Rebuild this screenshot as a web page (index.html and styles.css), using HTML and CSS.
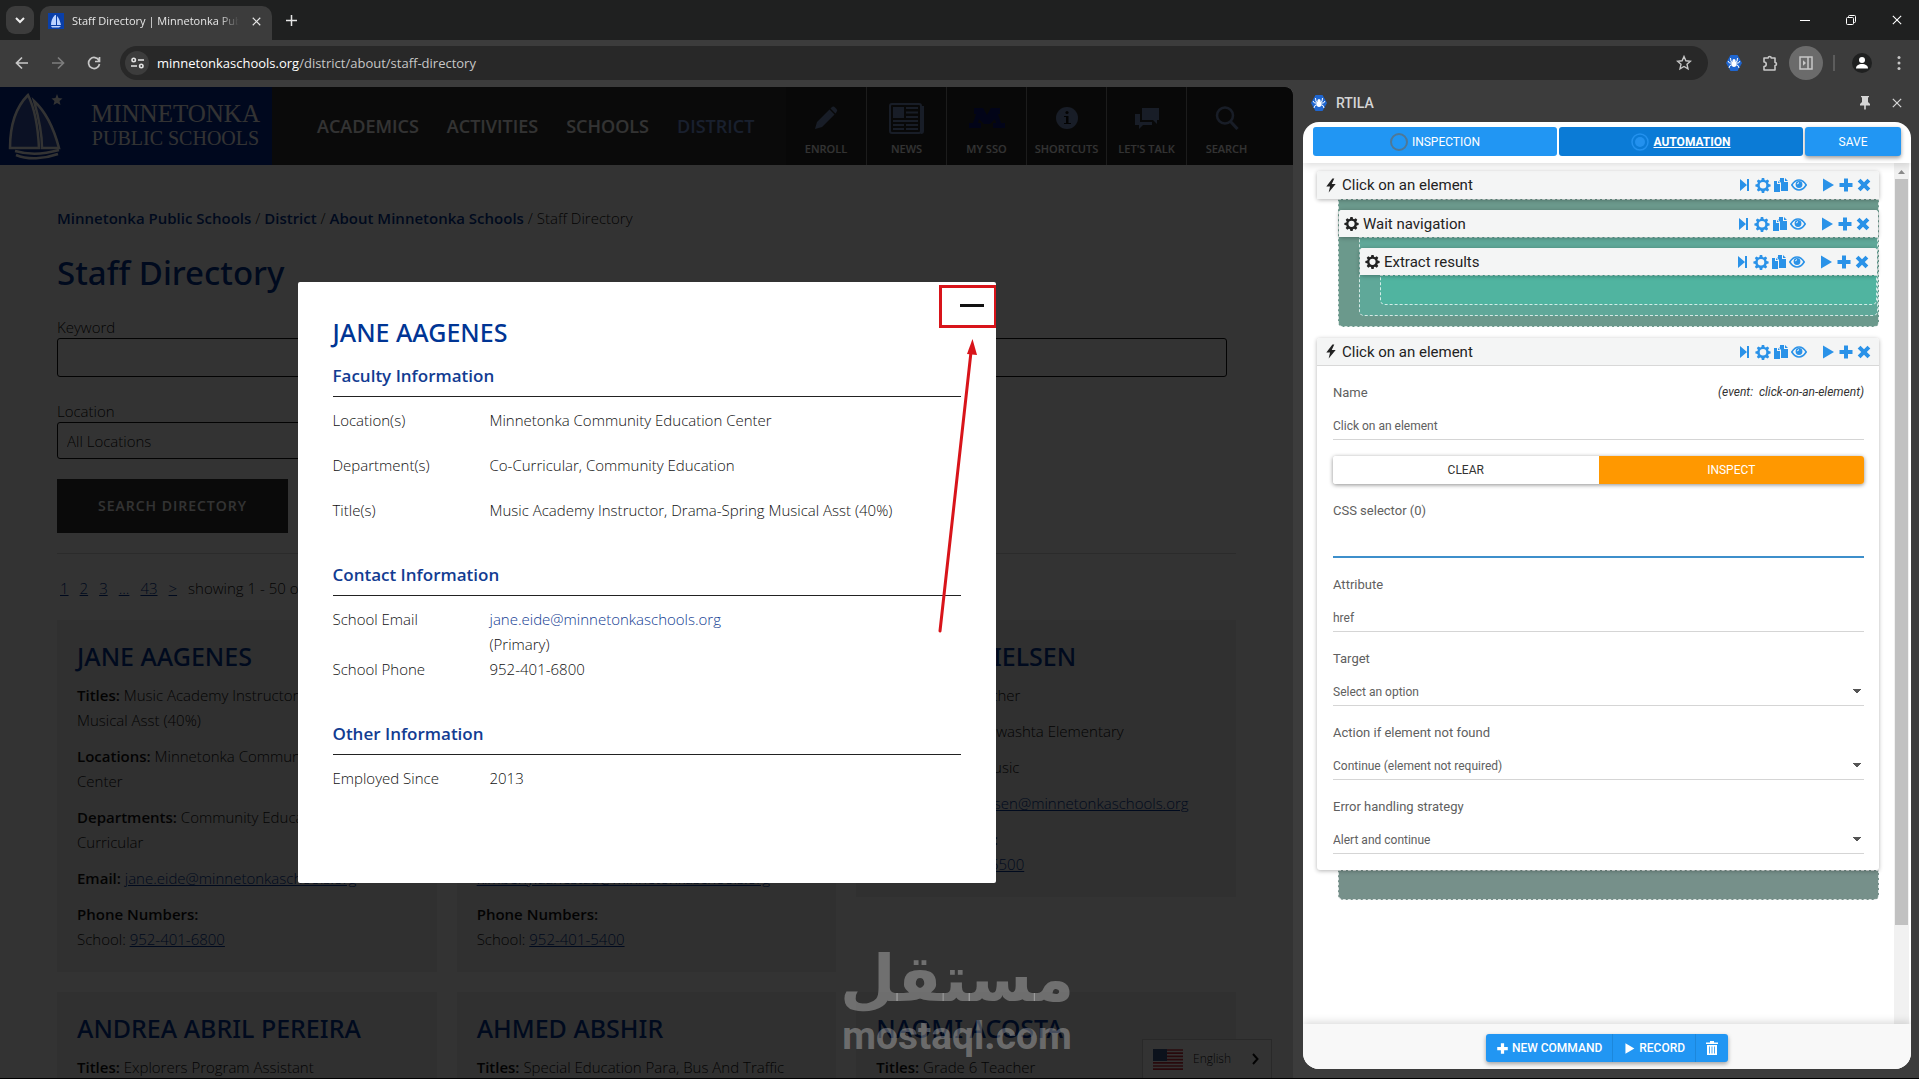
FILE: index.html
```html
<!DOCTYPE html>
<html lang="en">
<head>
<meta charset="utf-8">
<meta name="viewport" content="width=device-width, initial-scale=1">
<title>Staff Directory | Minnetonka Public Schools</title>
<link rel="stylesheet" href="styles.css">
</head>
<body>
<svg class="defs" width="0" height="0" aria-hidden="true">
  <symbol id="i-skip" viewBox="0 0 16 16"><path d="M3 2l7 6-7 6zM10 2h2v12h-2z"/></symbol>
  <symbol id="i-gear" viewBox="0 0 16 16"><path fill-rule="evenodd" d="M6.800 1h2.400l.4 2 1.200.5 1.700-1.100 1.700 1.700-1.100 1.700.5 1.200 2 .4v2.200l-2 .4-.5 1.200 1.100 1.700-1.700 1.700-1.700-1.100-1.200.5-.4 2H6.800l-.4-2-1.200-.5-1.700 1.100-1.700-1.700 1.100-1.700L2.400 9.900l-2-.4V7.400l2-.4.5-1.200-1.100-1.700 1.700-1.700 1.700 1.100 1.200-.5zM8 5a3.300 3.300 0 1 0 0 6.600A3.300 3.300 0 0 0 8 5z"/></symbol>
  <symbol id="i-copy" viewBox="0 0 16 16"><path d="M1 4h3v3h3v8H1zM5 4l2 2H5zM7 1h4v4h4v9H8V6L6 3.500H7zM12 1l3 3h-3z"/></symbol>
  <symbol id="i-eye" viewBox="0 0 16 16"><path d="M.8 8C3 4.500 5.300 3 8 3s5 1.500 7.200 5C13 11.500 10.700 13 8 13S3 11.500.8 8z" fill="none" stroke="currentColor" stroke-width="1.600"/><circle cx="8" cy="7.500" r="3.400"/><path d="M6.500 7.200A1.600 1.600 0 0 1 8 5.700" stroke="#fff" fill="none"/></symbol>
  <symbol id="i-play" viewBox="0 0 16 16"><path d="M3 1.500L14 8 3 14.500z"/></symbol>
  <symbol id="i-plus" viewBox="0 0 16 16"><path d="M6 1.500h4V6h4.500v4H10v4.500H6V10H1.500V6H6z"/></symbol>
  <symbol id="i-times" viewBox="0 0 16 16"><path d="M4.500 1.700L8 5.200l3.500-3.500 2.800 2.800L10.800 8l3.500 3.500-2.800 2.800L8 10.800l-3.500 3.500-2.800-2.800L5.200 8 1.700 4.500z"/></symbol>
  <symbol id="i-bolt" viewBox="0 0 12 16"><path d="M7.500.5L1 9h4l-1.500 6.500L11 6.500H6.800L9.500.5z"/></symbol>
  <symbol id="i-spider" viewBox="0 0 16 16"><path d="M4.500 0h7L16 8l-4.500 8h-7L0 8z" fill="#1f66d0"/><ellipse cx="8" cy="9" rx="2.400" ry="3" fill="#fff"/><circle cx="8" cy="5.500" r="1.500" fill="#fff"/><path d="M8 8L5 6.500 4.500 3M8 8L3.500 8 2 6M8 9L4 10.500 3 13M8 8l3-1.500.5-3.500M8 8h4.500L14 6M8 9l4 1.500 1 2.500" stroke="#fff" stroke-width="1" fill="none"/></symbol>
  <symbol id="i-close" viewBox="0 0 12 12"><path d="M1 1l10 10M11 1L1 11" stroke="currentColor" stroke-width="1.500" fill="none"/></symbol>
</svg>

<div class="browser">
  <div class="tabstrip">
    <button class="tab-search" aria-label="Search tabs"><svg width="10" height="7" viewBox="0 0 10 7"><path d="M1 1l4 4 4-4" fill="none" stroke="currentColor" stroke-width="2"/></svg></button>
    <div class="tab">
      <svg width="16" height="16" viewBox="0 0 16 16"><rect width="16" height="16" fill="#0a3fa8"/><path d="M7 2C4 5 3 8 3 12h5V2zM9 3v9h4C12 8 11 5 9 3zM3 13h10l-2 1.500H4z" fill="#bcd3ff"/></svg>
      <span class="tab-title">Staff Directory | Minnetonka Public Schools</span>
      <button class="plain" aria-label="Close tab"><svg width="9" height="9"><use href="#i-close"/></svg></button>
    </div>
    <button class="plain new-tab" aria-label="New tab"><svg width="11" height="11" viewBox="0 0 11 11"><path d="M5.500 0v11M0 5.500h11" stroke="currentColor" stroke-width="1.500"/></svg></button>
    <div class="win">
      <button class="plain" aria-label="Minimize"><svg width="10" height="10" viewBox="0 0 10 10"><path d="M0 5.500h10" stroke="currentColor"/></svg></button>
      <button class="plain" aria-label="Restore"><svg width="10" height="10" viewBox="0 0 10 10"><path d="M2.500 2V1.500a1 1 0 0 1 1-1h5a1 1 0 0 1 1 1v5a1 1 0 0 1-1 1H8M.5 3.500a1 1 0 0 1 1-1h5a1 1 0 0 1 1 1v5a1 1 0 0 1-1 1h-5a1 1 0 0 1-1-1z" fill="none" stroke="currentColor"/></svg></button>
      <button class="plain" aria-label="Close"><svg width="10" height="10" viewBox="0 0 12 12"><path d="M1 1l10 10M11 1L1 11" stroke="currentColor" stroke-width="1.300"/></svg></button>
    </div>
  </div>

  <div class="toolbar">
    <button class="plain nav-btn" aria-label="Back"><svg width="14" height="14" viewBox="0 0 14 14"><path d="M13 7H2M7 1.500L1.500 7 7 12.500" fill="none" stroke="currentColor" stroke-width="1.700"/></svg></button>
    <button class="plain nav-btn off" aria-label="Forward"><svg width="14" height="14" viewBox="0 0 14 14"><path d="M1 7h11M7 1.500L12.500 7 7 12.500" fill="none" stroke="currentColor" stroke-width="1.700"/></svg></button>
    <button class="plain nav-btn" aria-label="Reload"><svg width="14" height="14" viewBox="0 0 14 14"><path d="M12 4.500A5.500 5.500 0 1 0 12.500 8M12.500 1v4.500H8" fill="none" stroke="currentColor" stroke-width="1.700"/></svg></button>
    <div class="omnibox">
      <span class="site"><svg width="13" height="12" viewBox="0 0 13 12"><g fill="none" stroke="currentColor" stroke-width="1.600"><circle cx="2.700" cy="3" r="1.700"/><path d="M7 3h6M0 9h6"/><circle cx="10.300" cy="9" r="1.700"/></g></svg></span>
      <span class="url">minnetonkaschools.org<span>/district/about/staff-directory</span></span>
      <button class="plain" aria-label="Bookmark"><svg width="16" height="16" viewBox="0 0 16 16"><path d="M8 1.500l1.900 4.300 4.600.4-3.500 3.100 1 4.600L8 11.500l-4 2.400 1-4.600L1.500 6.200l4.600-.4z" fill="none" stroke="currentColor" stroke-width="1.400"/></svg></button>
    </div>
    <div class="exts">
      <button class="plain ext" aria-label="RTILA"><svg width="16" height="16"><use href="#i-spider"/></svg></button>
      <button class="plain ext" aria-label="Extensions"><svg width="17" height="17" viewBox="0 0 17 17"><path d="M2 3h4.200a1.500 1.500 0 0 1 3 0H13v4.500a1.500 1.500 0 0 1 0 3V15H2v-3.500a2.200 2.200 0 0 0 0-4.500z" fill="none" stroke="currentColor" stroke-width="1.600" stroke-linejoin="round"/></svg></button>
      <button class="plain ext active" aria-label="Side panel"><svg width="14" height="14" viewBox="0 0 14 14"><path d="M1 1h12v12H1zM9 1v12" fill="none" stroke="currentColor" stroke-width="1.500"/><path d="M4 4.200L7 7 4 9.800z" fill="currentColor"/></svg></button>
      <span class="sep"></span>
      <button class="plain ext" aria-label="Profile"><svg width="20" height="20" viewBox="0 0 20 20"><circle cx="10" cy="10" r="10" fill="#1f2020"/><circle cx="10" cy="7" r="3" fill="#fff"/><path d="M4 15.500c0-3 2.500-4.500 6-4.500s6 1.500 6 4.500z" fill="#fff"/></svg></button>
      <button class="plain ext" aria-label="Menu"><svg width="4" height="16" viewBox="0 0 4 16"><circle cx="2" cy="2.500" r="1.500" fill="currentColor"/><circle cx="2" cy="8" r="1.500" fill="currentColor"/><circle cx="2" cy="13.500" r="1.500" fill="currentColor"/></svg></button>
    </div>
  </div>

  <div class="work">
    <div class="page">
      <header class="site-head">
        <a class="logo" href="#">
          <svg width="60" height="70" viewBox="0 0 60 70"><g fill="#3a58b4" stroke="#fff" stroke-width="2.500"><path d="M26 4C14 16 8 34 8 57h29C36 36 32 16 26 4z"/><path d="M32 10c4 14 8 30 8 47h17C52 38 43 20 32 10z"/></g><path d="M13 60c14 4 30 3 44-1M14 64c12 5 28 4 42-1" fill="none" stroke="#fff" stroke-width="2.500"/><path d="M55 3l1.500 4 4 .5-3 2.500 1 4-3.500-2-3.500 2 1-4-3-2.500 4-.5z" fill="#fff"/></svg>
          <span class="logo-text"><span>MINNETONKA</span><span class="small">PUBLIC SCHOOLS</span></span>
        </a>
        <nav class="main-nav"><a href="#">ACADEMICS</a><a href="#">ACTIVITIES</a><a href="#">SCHOOLS</a><a href="#" class="on">DISTRICT</a></nav>
        <nav class="quick">
          <a href="#"><svg width="24" height="24" viewBox="0 0 24 24"><path d="M1 23l2-7L15.500 3.500l5 5L8 21zM16.500 2.500L18 1q1.500-1 3 .5l1.500 1.500q1.500 1.500 0 3L21.500 7.500z"/></svg>ENROLL</a>
          <a href="#"><svg width="35" height="31" viewBox="0 0 35 31"><path fill="none" stroke="currentColor" stroke-width="2" d="M3 1h27q2 0 2 2v25q0 2-2 2H3q-2 0-2-2V3q0-2 2-2zM32 4h2v24q0 2-2 2"/><path d="M4 4h11v11H4z"/><path d="M17 5h12M17 9.500h12M17 14h12M4 18h25M4 22h11M17 22h12M4 26h11M17 26h12" stroke="currentColor" stroke-width="2"/></svg>NEWS</a>
          <a href="#"><svg class="sso" width="38" height="22" viewBox="0 0 38 22"><path d="M6 1h9l4 7 4-7h9v6h-2l3 9h4v5H25v-5h3l-1-4-5 5h-6l-5-5-1 4h3v5H1v-5h4l3-9H6z"/></svg>MY SSO</a>
          <a href="#"><svg width="22" height="22" viewBox="0 0 22 22"><circle cx="11" cy="11" r="11"/><path d="M8 9h4.500v7H15v1H8v-1h2v-6H8z" fill="#111"/><circle cx="11" cy="5.500" r="1.600" fill="#111"/></svg>SHORTCUTS</a>
          <a href="#"><svg width="24" height="22" viewBox="0 0 24 22"><path d="M7 1h17v12h-2v4l-4-4H7zM0 7h5v8h12v3H8l-4 4v-4H0z"/></svg>LET'S TALK</a>
          <a href="#"><svg width="24" height="24" viewBox="0 0 24 24"><circle cx="10" cy="9.500" r="8" fill="none" stroke="currentColor" stroke-width="2.500"/><path d="M15.500 15.500L22.500 23" stroke="currentColor" stroke-width="3"/></svg>SEARCH</a>
        </nav>
      </header>

      <main class="content">
        <p class="crumbs"><a href="#">Minnetonka Public Schools</a> / <a href="#">District</a> / <a href="#">About Minnetonka Schools</a> / Staff Directory</p>
        <h1>Staff Directory</h1>
        <form class="search">
          <label for="kw">Keyword</label>
          <input id="kw" type="text">
          <label for="loc">Location</label>
          <select id="loc"><option>All Locations</option></select>
          <button type="button">SEARCH DIRECTORY</button>
        </form>
        <p class="pager"><a href="#">1</a><a href="#">2</a><a href="#">3</a><a href="#">...</a><a href="#">43</a><a href="#">&gt;</a><span>showing 1 - 50 of 2119</span></p>
        <div class="people">
          <article>
            <h2>JANE AAGENES</h2>
            <p><b>Titles:</b> Music Academy Instructor, Drama-Spring Musical Asst (40%)</p>
            <p><b>Locations:</b> Minnetonka Community Education Center</p>
            <p><b>Departments:</b> Community Education, Co-Curricular</p>
            <p><b>Email:</b> <a href="#">jane.eide@minnetonkaschools.org</a></p>
            <p><b>Phone Numbers:</b><br>School: <a href="#">952-401-6800</a></p>
          </article>
          <article>
            <h2>KIMBERLY AANESTAD</h2>
            <p><b>Titles:</b> Special Education Paraprofessional, Student Support</p>
            <p><b>Locations:</b> Minnetonka Middle School East, Excelsior</p>
            <p><b>Departments:</b> Special Education</p>
            <p><b>Email:</b><br><a href="#">kimberly.aanestad@minnetonkaschools.org</a></p>
            <p><b>Phone Numbers:</b><br>School: <a href="#">952-401-5400</a></p>
          </article>
          <article>
            <h2>ASHLEY NIELSEN</h2>
            <p><b>Titles:</b> Music Teacher</p>
            <p><b>Locations:</b> Minnewashta Elementary</p>
            <p><b>Departments:</b> Music</p>
            <p><b>Email:</b> <a href="#">ashley.nielsen@minnetonkaschools.org</a></p>
            <p><b>Phone Numbers:</b><br>School: <a href="#">952-401-5500</a></p>
          </article>
          <article>
            <h2>ANDREA ABRIL PEREIRA</h2>
            <p><b>Titles:</b> Explorers Program Assistant</p>
          </article>
          <article>
            <h2>AHMED ABSHIR</h2>
            <p><b>Titles:</b> Special Education Para, Bus And Traffic</p>
          </article>
          <article>
            <h2>NAOMI ACOSTA</h2>
            <p><b>Titles:</b> Grade 6 Teacher</p>
          </article>
        </div>
      </main>

      <button class="lang"><svg width="30" height="21" viewBox="0 0 30 21"><path fill="#fff" d="M0 0h30v21H0z"/><path d="M0 1h30M0 4.200h30M0 7.400h30M0 10.600h30M0 13.800h30M0 17h30M0 20.200h30" stroke="#c8313f" stroke-width="1.700"/><path fill="#3c5a8c" d="M0 0h14v12H0z"/></svg><span>English</span><svg width="7" height="12" viewBox="0 0 7 12"><path d="M1 1l4.500 5L1 11" fill="none" stroke="#111" stroke-width="2"/></svg></button>

      <div class="overlay">
        <section class="modal" role="dialog" aria-labelledby="who">
          <button class="plain dismiss" aria-label="Close"><svg width="24" height="3" viewBox="0 0 24 3"><path d="M0 1.500h24" stroke="#111" stroke-width="3"/></svg></button>
          <h2 id="who">JANE AAGENES</h2>
          <h3>Faculty Information</h3>
          <dl class="roomy">
            <dt>Location(s)</dt><dd>Minnetonka Community Education Center</dd>
            <dt>Department(s)</dt><dd>Co-Curricular, Community Education</dd>
            <dt>Title(s)</dt><dd>Music Academy Instructor, Drama-Spring Musical Asst (40%)</dd>
          </dl>
          <h3>Contact Information</h3>
          <dl>
            <dt>School Email</dt><dd><a href="#">jane.eide@minnetonkaschools.org</a><br>(Primary)</dd>
            <dt>School Phone</dt><dd>952-401-6800</dd>
          </dl>
          <h3>Other Information</h3>
          <dl><dt>Employed Since</dt><dd>2013</dd></dl>
          <svg class="note" viewBox="0 0 698 601" aria-hidden="true"><g fill="none" stroke="#d8141a" stroke-width="3"><rect x="642.500" y="4.500" width="55" height="40"/><path d="M642 349L673 70" stroke-linecap="round"/></g><path d="M674.500 57l4.500 16-10-1z" fill="#d8141a"/></svg>
        </section>
      </div>

      <div class="mark" aria-hidden="true"><span lang="ar" dir="rtl">مستقل</span><span class="dom">mostaql.com</span></div>
    </div>

    <aside class="side">
      <div class="side-head"><svg width="16" height="16"><use href="#i-spider"/></svg><span>RTILA</span>
        <button class="plain" aria-label="Pin"><svg width="12" height="14" viewBox="0 0 12 14"><path d="M2 0h8v1.200H9V6l2 2v1.500H6.800V13L6 14l-.8-1V9.500H1V8l2-2V1.200H2z" fill="currentColor"/></svg></button>
        <button class="plain" aria-label="Close panel"><svg width="10" height="10"><use href="#i-close"/></svg></button></div>
      <div class="panel">
        <div class="modes">
          <button><svg width="18" height="18" viewBox="0 0 18 18"><circle cx="9" cy="9" r="8" fill="none" stroke="#4f7896" stroke-width="2"/></svg>INSPECTION</button>
          <button class="on"><svg width="18" height="18" viewBox="0 0 18 18"><circle cx="9" cy="9" r="8" fill="none" stroke="#2391ee" stroke-width="1.500"/><circle cx="9" cy="9" r="5" fill="#2391ee"/></svg><span>AUTOMATION</span></button>
          <button class="save">SAVE</button>
        </div>

        <div class="scroller">
          <div class="commands">
            <div class="cmd"><div class="bar"><svg class="kind bolt" width="12" height="15"><use href="#i-bolt"/></svg><span class="name">Click on an element</span><span class="tools"></span></div></div>
            <div class="nest n1">
              <div class="cmd"><div class="bar"><svg class="kind" width="15" height="15"><use href="#i-gear"/></svg><span class="name">Wait navigation</span><span class="tools"></span></div></div>
              <div class="nest n2">
                <div class="cmd"><div class="bar"><svg class="kind" width="15" height="15"><use href="#i-gear"/></svg><span class="name">Extract results</span><span class="tools"></span></div></div>
                <div class="nest n3"></div>
              </div>
            </div>

            <div class="cmd open">
              <div class="bar"><svg class="kind bolt" width="12" height="15"><use href="#i-bolt"/></svg><span class="name">Click on an element</span><span class="tools"></span></div>
              <form class="fields">
                <div class="field"><div class="line"><label for="f-name">Name</label><em>(event:&nbsp; click-on-an-element)</em></div><input id="f-name" type="text" value="Click on an element"></div>
                <div class="pair"><button type="button">CLEAR</button><button type="button" class="inspect">INSPECT</button></div>
                <div class="field"><label for="f-css">CSS selector (0)</label><input id="f-css" class="focus" type="text"></div>
                <div class="field"><label for="f-attr">Attribute</label><input id="f-attr" type="text" value="href"></div>
                <div class="field"><label for="f-target">Target</label><select id="f-target"><option>Select an option</option></select></div>
                <div class="field"><label for="f-action">Action if element not found</label><select id="f-action"><option>Continue (element not required)</option></select></div>
                <div class="field"><label for="f-err">Error handling strategy</label><select id="f-err"><option>Alert and continue</option></select></div>
              </form>
            </div>
            <div class="nest n0"></div>
          </div>
          <div class="track"><svg width="15" height="16" viewBox="0 0 15 16"><path d="M4 11h7L7.500 7z" fill="#8a8a8a"/></svg><div class="thumb"></div></div>
        </div>

        <div class="side-foot">
          <div class="group"><button><svg width="13" height="13"><use href="#i-plus"/></svg>NEW COMMAND</button><button><svg width="13" height="13"><use href="#i-play"/></svg>RECORD</button><button aria-label="Delete"><svg width="12" height="14" viewBox="0 0 12 14"><path fill-rule="evenodd" d="M4 0h4v1.500h4V3H0V1.500h4zM1 4h10v10H1zM3 5.500v7h.8v-7zM5.600 5.500v7h.8v-7zM8.200 5.500v7H9v-7z"/></svg></button></div>
        </div>
      </div>
    </aside>
  </div>
</div>
<script src="tools.js"></script>
</body>
</html>
```
FILE: styles.css
```css
* { box-sizing: border-box; }
body { margin: 0; font-family: "Open Sans", "Noto Sans", sans-serif; font-size: 15px; line-height: 26px; background: #3c3c3c; }
h1, h2, h3, p, dl, dd { margin: 0; }
button, input, select { font: inherit; }
svg { fill: currentColor; flex: none; }
.defs { position: absolute; }
.plain { display: grid; place-items: center; padding: 0; border: 0; background: none; color: inherit; }
.browser { height: 100vh; display: flex; flex-direction: column; overflow: hidden; border-bottom: 1px solid #000; }

.tabstrip { display: flex; align-items: center; height: 40px; padding: 6px 17px 0 6px; background: #1f2020; color: #e6e6e6; font-size: 11px; flex: none; }
.tab-search { width: 28px; height: 28px; margin: 0 6px 6px 0; padding: 0; border: 0; border-radius: 9px; background: #3c3c3c; color: #eee; display: grid; place-items: center; }
.tab { display: flex; align-items: center; gap: 8px; width: 232px; height: 34px; padding: 0 11px 4px 8px; border-radius: 10px 10px 0 0; background: #3c3c3c; }
.tab-title { flex: 1; margin-right: 5px; overflow: hidden; white-space: nowrap; -webkit-mask-image: linear-gradient(90deg, #000 88%, transparent); mask-image: linear-gradient(90deg, #000 88%, transparent); }
.new-tab { margin: 0 0 5px 14px; }
.win { display: flex; gap: 36px; margin: 0 0 6px auto; color: #fff; }

.toolbar { display: flex; align-items: center; height: 47px; padding: 0 8px 1px 4px; background: #3c3c3c; color: #c7c7c7; flex: none; }
.nav-btn { width: 36px; height: 34px; }
.off { color: #7d7d7d; }
.omnibox { flex: 1; display: flex; align-items: center; height: 34px; margin-left: 8px; padding: 0 16px 0 5px; border-radius: 17px; background: #282828; }
.site { display: grid; place-items: center; width: 24px; height: 24px; border-radius: 50%; background: #3c3c3c; color: #e3e3e3; }
.url { flex: 1; padding-left: 8px; font-size: 13px; color: #fff; }
.url span { color: #c7c7c7; }
.exts { display: flex; align-items: center; gap: 2px; margin-left: 9px; }
.ext { width: 34px; height: 34px; }
.ext:last-child { width: 36px; margin-right: -6px; }
.active { border-radius: 50%; background: #6b6b6b; }
.sep { width: 2px; height: 16px; margin: 0 8px; background: #5c5c5c; }

.work { flex: 1; min-height: 0; display: grid; grid-template-columns: minmax(0, 1fr) 608px; gap: 10px; padding-right: 8px; }
.page { position: relative; overflow: hidden; background: #fff; border-top-right-radius: 8px; font-weight: 300; color: #111; }

.site-head { display: flex; height: 78px; background: #343434; color: #fff; font-weight: 600; }
.logo { display: flex; align-items: center; gap: 29px; width: 272px; padding: 0 10px 0 2px; background: #002896; color: #fff; text-decoration: none; }
.logo svg { overflow: visible; }
.logo-text { display: flex; flex-direction: column; align-items: center; font-family: "Liberation Serif", "Times New Roman", serif; font-weight: 400; font-size: 25px; line-height: 25px; }
.small { font-size: 20px; }
.main-nav { display: flex; align-items: center; gap: 28px; padding-left: 45px; font-size: 18px; }
.main-nav a, .quick a { color: inherit; text-decoration: none; white-space: nowrap; }
.main-nav .on { color: #7d9ee6; }
.quick { display: grid; grid-template-columns: repeat(6, 80px); margin-left: auto; padding-right: 27px; background: #2c2c2c; font-size: 11px; line-height: 16px; }
.quick a { display: grid; grid-template-rows: 46px 16px; justify-items: center; align-items: center; padding-top: 8px; border-left: 1px solid #8c8c8c; }
.quick a:first-child { border: 0; }
.quick svg { color: #7890c0; }
.quick .sso { color: #0a1478; }

.content { padding: 40px 57px 0; }
.content a { color: #003594; }
.crumbs a { font-weight: 600; text-decoration: none; }
h1 { margin-top: 20px; font-family: "Noto Sans", sans-serif; font-weight: 500; font-size: 33px; line-height: 44px; color: #003594; }
.search { display: flex; flex-direction: column; align-items: flex-start; padding: 21px 9px 20px 0; border-bottom: 1px solid #d8d8d8; }
.search label { line-height: 22px; }
.search input { width: 100%; height: 39px; margin-bottom: 23px; border: 1px solid #111; border-radius: 3px; background: #fff; }
.search select { appearance: none; width: 60%; height: 37px; padding: 0 9px; border: 1px solid #111; border-radius: 3px; background: #fff; color: #111; font-weight: 300; }
.search button { margin-top: 20px; width: 231px; height: 54px; border: 0; background: #333; color: #fff; font-weight: 600; font-size: 14px; letter-spacing: 1px; }
.pager { display: flex; gap: 11px; padding: 21px 3px 19px; }
.people { display: grid; grid-template-columns: repeat(3, minmax(0, 1fr)); align-items: start; gap: 20px; line-height: 25px; }
.people article { padding: 20px; background: #ededed; }
.people article:nth-child(-n+2) { align-self: stretch; }
.people h2, .modal h2 { font-family: "Noto Sans", sans-serif; font-weight: 500; font-size: 25px; line-height: 32px; color: #003594; }
.people p { margin-top: 11px; }
.people b { font-weight: 600; }

.lang { position: absolute; right: 21px; bottom: 0; display: flex; align-items: center; gap: 10px; width: 130px; height: 39px; padding: 0 12px 0 10px; border: 1px solid #ccc; border-bottom: 0; background: #fff; color: #111; font-size: 12px; }
.lang span { flex: 1; text-align: left; }

.overlay { position: absolute; inset: 0; display: flex; align-items: center; justify-content: center; background: rgba(0, 0, 0, .8); }
.modal { position: relative; width: 698px; min-height: 601px; padding: 34px 35px 24px; border-radius: 2px; background: #fff; }
.modal h3 { margin-top: 16px; padding-bottom: 8px; border-bottom: 1px solid #222; font-weight: 600; font-size: 17px; line-height: 24px; color: #123c92; }
.modal dl { display: grid; grid-template-columns: 157px 1fr; padding: 11px 0 24px; line-height: 25px; }
.modal .roomy { row-gap: 20px; }
.modal a { color: #123c92; text-decoration: none; }
.dismiss { position: absolute; right: 12px; top: 11px; height: 24px; }
.note { position: absolute; inset: 0; width: 100%; height: 100%; pointer-events: none; }

.mark { position: absolute; right: 219px; bottom: 22px; display: flex; flex-direction: column; align-items: center; color: rgba(255, 255, 255, .3); font-weight: 700; pointer-events: none; }
.mark span { font-family: "DejaVu Sans", sans-serif; font-size: 64px; line-height: 74px; }
.mark .dom { font-family: Roboto, sans-serif; font-size: 39px; line-height: 40px; }

.side { display: flex; flex-direction: column; min-height: 0; padding-bottom: 9px; font-family: Roboto, sans-serif; }
.side-head { display: flex; align-items: center; gap: 9px; height: 35px; padding: 0 9px 3px 8px; color: #d5d5d5; font-size: 14px; font-weight: 500; flex: none; }
.side-head span { flex: 1; }
.side-head .plain:last-child { margin-left: 12px; }
.panel { flex: 1; min-height: 0; display: flex; flex-direction: column; border-radius: 16px; background: #fff; overflow: hidden; }
.modes { display: grid; grid-template-columns: 1fr 1fr 96px; gap: 2px; padding: 5px 10px 7px; box-shadow: 0 2px 8px rgba(0, 0, 0, .15); z-index: 1; }
.modes button { display: flex; align-items: center; justify-content: center; gap: 4px; height: 29px; border: 0; border-radius: 3px; background: #2196f3; color: #fff; font-size: 12px; }
.modes .on { background: #0b7bd6; font-weight: 700; text-decoration: underline; }
.modes .save { box-shadow: 0 2px 4px rgba(0, 0, 0, .4); }

.scroller { flex: 1; min-height: 0; display: grid; grid-template-columns: 1fr 15px; padding-right: 2px; }
.commands { padding: 8px 15px 0 14px; overflow: hidden; }
.cmd { position: relative; border-radius: 3px; background: #fff; box-shadow: 0 1px 4px rgba(0, 0, 0, .3); }
.bar { display: flex; align-items: center; height: 28px; padding: 0 7px 0 5px; background: #f4f5f5; border-radius: 3px 3px 0 0; color: #222; }
.nest .bar { height: 27px; }
.kind { margin-right: 4px; }
.bolt { margin: 0 5px 0 3px; }
.name { flex: 1; font-size: 15px; line-height: 20px; }
.tools { display: flex; align-items: center; gap: 2px; color: #2a92e8; }
.tools .gap { margin-left: 11px; }
.nest { margin-left: 21px; min-height: 30px; border: 1px dashed rgba(255, 255, 255, .75); border-radius: 0 0 5px 5px; }
.n0 { background: #76908a; }
.n1 { padding: 10px 0; background: #6b998c; }
.n2 { margin-left: 20px; padding: 10px 0; background: #5fa899; }
.n3 { margin-left: 20px; background: #50b4a0; }
.open { margin-top: 11px; }
.open .bar { border-bottom: 1px solid #d8d8d8; }

.fields { padding: 17px 15px 16px 16px; color: #606060; font-size: 12px; line-height: 20px; }
.field { display: grid; gap: 9px; margin-bottom: 17px; }
.field:last-child { margin-bottom: 0; }
.field label { font-size: 13px; }
.line { display: flex; justify-content: space-between; }
.line em { color: #333; line-height: 18px; }
.field input, .field select { width: 100%; height: 28px; padding: 0; border: 0; border-bottom: 1px solid #d5d5d5; border-radius: 0; outline: 0; background: #fff; color: #606060; }
.field .focus { border-bottom: 2px solid #3d8fcb; }
.field select { appearance: none; background-image: conic-gradient(from -45deg at 50% 100%, #555 0 90deg, transparent 0); background-size: 8px 4px; background-position: right 3px top 11px; background-repeat: no-repeat; }
.pair { display: grid; grid-template-columns: 1fr 1fr; height: 28px; margin: -1px 0 17px; border-radius: 3px; box-shadow: 0 1px 4px rgba(0, 0, 0, .45); }
.pair button { border: 0; border-radius: 3px 0 0 3px; background: #fff; color: #333; }
.pair .inspect { border-radius: 0 3px 3px 0; background: #ff9800; color: #fff; }
.track { display: flex; flex-direction: column; background: #f1f1f1; }
.thumb { flex: none; height: 88%; max-height: 746px; margin: 0 1px; background: #c1c1c1; }

.side-foot { display: flex; justify-content: center; padding: 10px 0 7px; height: 45px; background: #f8f8f8; box-shadow: 0 -2px 8px rgba(0, 0, 0, .15); z-index: 1; }
.group { display: flex; height: 28px; border-radius: 3px; background: #2196f3; box-shadow: 0 2px 4px rgba(0, 0, 0, .35); }
.group button { display: flex; align-items: center; gap: 3px; padding: 0 10px; border: 0; background: none; color: #fff; font-size: 12px; font-weight: 500; }
.group button + button { border-left: 1px solid #1c87db; }
```
FILE: tools.js
```js
// Every command row carries the same action buttons.
const actions = [
  ['skip', 'Skip'], ['gear', 'Settings'], ['copy', 'Duplicate'], ['eye', 'Show'],
  ['play', 'Run'], ['plus', 'Add'], ['times', 'Remove']
];
document.querySelectorAll('.tools').forEach(box => {
  box.innerHTML = actions.map(([icon, label]) =>
    `<button class="plain${icon === 'play' ? ' gap' : ''}" type="button" aria-label="${label}"><svg width="16" height="16"><use href="#i-${icon}"/></svg></button>`
  ).join('');
});
```
